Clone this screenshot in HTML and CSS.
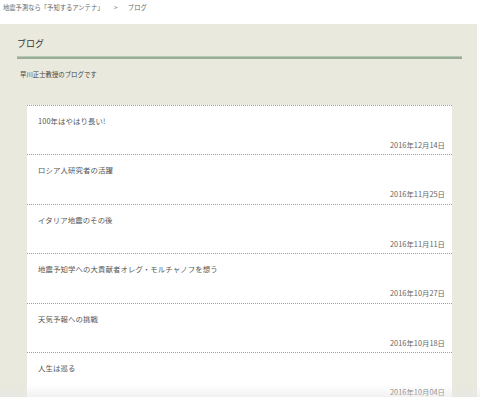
FILE: index.html
```html
<!DOCTYPE html>
<html lang="ja">
    <head>
        <meta charset="UTF-8" />
        <title>ブログ</title>
        <link rel="stylesheet" href="styles.css">
    </head>
    <body>
        <div class="breadcrumb">
            <a href="#">地震予測なら「予知するアンテナ」</a>
            <span class="sep">&gt;</span>
            <span>ブログ</span>
        </div>

        <div class="panel">
            <h1 class="panel-title">ブログ</h1>
            <p class="lead">早川正士教授のブログです</p>

            <!-- blog entries -->
            <ul class="entries">
                <li class="entry">
                    <a class="entry-title" href="#">100年はやはり長い!</a>
                    <div class="entry-date">2016年12月14日</div>
                </li>
                <li class="entry">
                    <a class="entry-title" href="#">ロシア人研究者の活躍</a>
                    <div class="entry-date">2016年11月25日</div>
                </li>
                <li class="entry">
                    <a class="entry-title" href="#">イタリア地震のその後</a>
                    <div class="entry-date">2016年11月11日</div>
                </li>
                <li class="entry">
                    <a class="entry-title" href="#">地震予知学への大貢献者オレグ・モルチャノフを想う</a>
                    <div class="entry-date">2016年10月27日</div>
                </li>
                <li class="entry">
                    <a class="entry-title" href="#">天気予報への挑戦</a>
                    <div class="entry-date">2016年10月18日</div>
                </li>
                <li class="entry">
                    <a class="entry-title" href="#">人生は巡る</a>
                    <div class="entry-date">2016年10月04日</div>
                </li>
            </ul>
        </div>
        <div class="fade"></div>
    </body>
</html>
```

FILE: styles.css
```css
body {
    margin: 0;
    background-color: #fff;
    color: #555;
    font-family: "Noto Sans CJK JP", "Noto Sans", sans-serif;
}
a {
    color: inherit;
    text-decoration: none;
}

/* breadcrumb */
.breadcrumb {
    height: 24px;
    padding: 4px 0 0 3px;
    box-sizing: border-box;
    font-size: 6.3px;
    line-height: 8px;
    color: #666;
}
.breadcrumb .sep {
    margin: 0 9px 0 9px;
}

/* main panel */
.panel {
    background-color: #e9e9de;
    margin-right: 3px;
    padding: 0 15px 0 17px;
    height: 380px;
}
.panel-title {
    margin: 0;
    padding: 14px 0 7px 0;
    font-size: 9px;
    line-height: 12px;
    font-weight: normal;
    color: #333;
    border-bottom: 2px solid #99ae96;
    box-shadow: 0 -1px 0 #b9c8b4 inset;
}
.lead {
    margin: 0;
    padding: 11px 0 0 3px;
    font-size: 6.4px;
    line-height: 10px;
    color: #444;
}

.entries {
    list-style: none;
    margin: 25px 10px 0 10px;
    padding: 0;
    background-color: #fff;
}
.entry {
    border-top: 1px dotted #88b088;
    height: 48.4px;
    padding: 0 7px 0 11px;
    font-size: 7.4px;
    line-height: 10px;
}
.entry-title {
    display: block;
    padding-top: 10px;
    color: #555;
    letter-spacing: 0.1px;
}
.entry-date {
    padding-top: 14px;
    text-align: right;
    color: #666;
}

.fade {
    position: fixed;
    left: 0;
    right: 0;
    bottom: 0;
    height: 12px;
    background: linear-gradient(rgba(240, 240, 240, 0), rgba(232, 232, 232, 0.6));
}
```
